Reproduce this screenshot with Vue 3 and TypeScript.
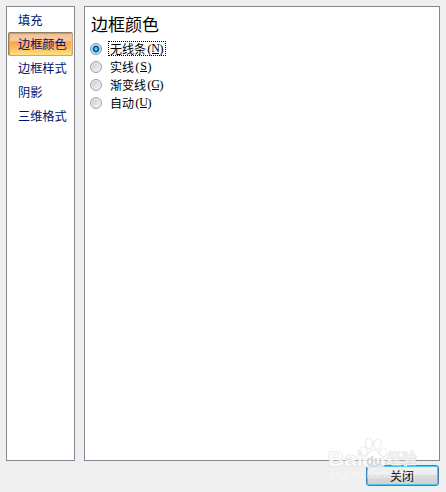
<script setup lang="ts">
import { ref } from 'vue'

interface Option {
  label: string
  key: string
}

const categories: string[] = ['填充', '边框颜色', '边框样式', '阴影', '三维格式']
const options: Option[] = [
  { label: '无线条', key: 'N' },
  { label: '实线', key: 'S' },
  { label: '渐变线', key: 'G' },
  { label: '自动', key: 'U' },
]

const category = ref(1)
const selected = ref(0)
</script>

<template>
  <div class="dialog">
    <div class="panels">
      <nav class="sidebar">
        <button
          v-for="(name, i) in categories"
          :key="name"
          class="category"
          :class="{ active: i === category }"
          @click="category = i"
        >{{ name }}</button>
      </nav>
      <main class="content">
        <h1>边框颜色</h1>
        <div class="options" role="radiogroup">
          <div
            v-for="(option, i) in options"
            :key="option.key"
            class="option"
            role="radio"
            :aria-checked="i === selected"
            @click="selected = i"
          >
            <span class="radio" :class="{ checked: i === selected }"></span>
            <span class="label" :class="{ focused: i === selected }">
              <span class="name">{{ option.label }}</span>
              <span class="mnemonic"><i>(</i><u>{{ option.key }}</u><i>)</i></span>
            </span>
          </div>
        </div>
      </main>
    </div>
    <footer>
      <button class="close">关闭</button>
    </footer>
    <svg class="watermark" width="100" height="50" viewBox="0 0 100 50" aria-hidden="true">
      <g class="mark">
        <text x="1" y="29.5" font-size="21" textLength="35" lengthAdjust="spacingAndGlyphs" class="brand">Bai</text>
        <ellipse cx="36.5" cy="15" rx="3.3" ry="4.5" transform="rotate(-18 36.5 15)" />
        <ellipse cx="42" cy="7.5" rx="3.5" ry="5" transform="rotate(-6 42 7.5)" />
        <ellipse cx="50.5" cy="8" rx="3.5" ry="5" transform="rotate(12 50.5 8)" />
        <ellipse cx="56" cy="16.5" rx="3.3" ry="4.5" transform="rotate(18 56 16.5)" />
        <path d="M46.500 14c-4 0-5 4-8 7-4 4-3 10 2 10 3 0 4-1 6-1s4 1 7 1c5 0 6-6 2-10-3-3-5-7-9-7z" />
        <text x="59.5" y="28" font-size="15" class="cjk">经验</text>
      </g>
      <text x="39" y="28.500" font-size="13" textLength="16" lengthAdjust="spacingAndGlyphs" class="brand inner">du</text>
      <text x="3" y="41.5" font-size="10.5" textLength="85" lengthAdjust="spacingAndGlyphs" class="site">jingyan.baidu.com</text>
    </svg>
  </div>
</template>

<style>
body {
  margin: 0;
  background: #efefef;
}
</style>

<style scoped>
.dialog {
  position: relative;
  box-sizing: border-box;
  width: 446px;
  height: 492px;
  padding: 6px 6px 0;
  overflow: hidden;
  background: #efefef;
  font-family: "Noto Sans CJK SC", sans-serif;
  font-size: 12px;
  color: #000;
}
.panels {
  display: flex;
  gap: 9px;
  height: 455px;
}
.sidebar,
.content {
  box-sizing: border-box;
  border: 1px solid #828790;
  background: #fff;
}
.sidebar {
  display: flex;
  flex-direction: column;
  width: 69px;
  padding: 1px;
}
.category {
  flex: none;
  box-sizing: border-box;
  height: 24px;
  padding: 1px 0 0 9px;
  border: 1px solid transparent;
  background: none;
  font: inherit;
  font-size: 12.2px;
  line-height: 21px;
  text-align: left;
  white-space: nowrap;
  color: #00156e;
}
.category.active {
  border-color: #8e8064 #c3a775 #c2a978 #9c7d52;
  border-radius: 2px;
  background: linear-gradient(#f3c19a 0, #fbc99a 34%, #f8a552 40%, #fbb259 62%, #ffe57c 100%);
  box-shadow: inset 0 1px 1px #c39a72, inset 1px 0 1px #e6a660, inset -1px 0 1px #f6cf80;
}
.content {
  width: 356px;
  padding: 5px 0 0 5px;
}
h1 {
  margin: 0 0 4px 1px;
  font-size: 17px;
  font-weight: 400;
  line-height: 24px;
}
.options {
  display: flex;
  flex-direction: column;
  margin-top: -1px;
}
.option {
  display: flex;
  align-items: center;
  gap: 6px;
  height: 18px;
}
.radio {
  position: relative;
  top: 1px;
  box-sizing: border-box;
  width: 12px;
  height: 12px;
  border: 1px solid #a0a2a4;
  border-radius: 50%;
  background: linear-gradient(135deg, #c4c7ca, #e2e4e6 55%, #f4f4f4);
  box-shadow: inset 0 0 0 1px #eeeeee;
}
.radio.checked {
  border-color: #6596b3;
  background: radial-gradient(circle at 50% 50%, #8be5fb 0, #35b4e6 1.2px, #0d5c94 2.6px, #1a5a88 3.1px, #b3dcf0 3.8px, #d9eef7 5px);
  box-shadow: none;
}
.label {
  display: flex;
  box-sizing: border-box;
  height: 15px;
  padding: 0 1px;
  border: 1px dotted transparent;
  line-height: 13px;
  white-space: nowrap;
}
.label.focused {
  border-color: #000;
}
.mnemonic {
  display: flex;
  padding-left: 1px;
  font-family: "Liberation Serif", serif;
  font-size: 13px;
}
.mnemonic i,
.mnemonic u {
  display: flex;
  justify-content: center;
  font-style: normal;
}
.mnemonic i {
  width: 5px;
}
.mnemonic u {
  width: 7px;
  height: 11px;
  border-bottom: 1px solid #000;
  text-decoration: none;
  font-size: 12px;
  line-height: 12px;
}
footer {
  display: flex;
  justify-content: flex-end;
  padding: 4px 1px 0 0;
}
.close {
  box-sizing: border-box;
  width: 73px;
  height: 21px;
  padding: 0 1px 1px 0;
  border: 1px solid #3c7fb1;
  border-radius: 3px;
  background: linear-gradient(#f2f2f2 0, #ebebeb 48%, #dddddd 50%, #cfcfcf 100%);
  box-shadow: inset 0 0 0 1px #48cbf0;
  font: inherit;
  line-height: 17px;
  color: #000;
}
.watermark {
  position: absolute;
  left: 327px;
  top: 436px;
  pointer-events: none;
}
.mark {
  fill: #fff;
  fill-opacity: 0.75;
  stroke: #dadada;
  stroke-opacity: 0.8;
  stroke-width: 1.2;
  paint-order: stroke;
}
.brand {
  font-family: "Liberation Sans", Arial, sans-serif;
  font-weight: 700;
}
.inner {
  fill: #d4d4d4;
}
.cjk {
  font-family: "Noto Sans CJK SC", sans-serif;
}
.site {
  font-family: "Liberation Sans", Arial, sans-serif;
  fill: #fff;
  fill-opacity: 0.5;
}
</style>
